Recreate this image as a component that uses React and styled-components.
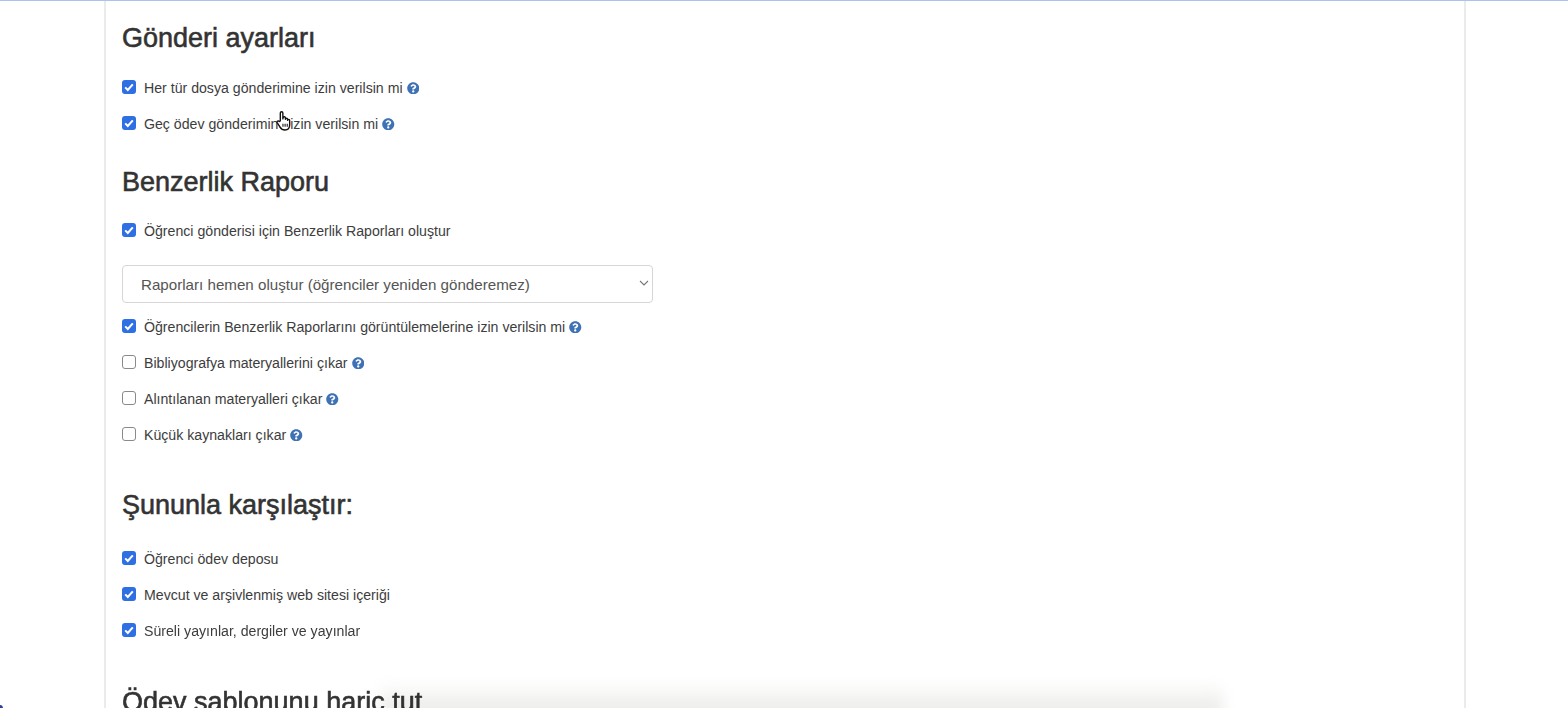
import React from 'react';
import styled, {createGlobalStyle} from 'styled-components';
import {FaQuestionCircle} from 'react-icons/fa';

const GlobalStyle = createGlobalStyle`
html, body {
    margin: 0;
    padding: 0;
    background: #fff;
    height: 708px;
    overflow: hidden;
}
* {
    box-sizing: border-box;
}
`

const sections = [
    {title: 'Gönderi ayarları', top: 22, gap: 17, rows: [
        {text: 'Her tür dosya gönderimine izin verilsin mi', checked: true, help: true},
        {text: 'Geç ödev gönderimine izin verilsin mi', checked: true, help: true},
    ]},
    {title: 'Benzerlik Raporu', top: 25, gap: 16, rows: [
        {text: 'Öğrenci gönderisi için Benzerlik Raporları oluştur', checked: true},
        {select: 'Raporları hemen oluştur (öğrenciler yeniden gönderemez)'},
        {text: 'Öğrencilerin Benzerlik Raporlarını görüntülemelerine izin verilsin mi', checked: true, help: true},
        {text: 'Bibliyografya materyallerini çıkar', help: true},
        {text: 'Alıntılanan materyalleri çıkar', help: true},
        {text: 'Küçük kaynakları çıkar', help: true},
    ]},
    {title: 'Şununla karşılaştır:', top: 37, gap: 21, rows: [
        {text: 'Öğrenci ödev deposu', checked: true},
        {text: 'Mevcut ve arşivlenmiş web sitesi içeriği', checked: true},
        {text: 'Süreli yayınlar, dergiler ve yayınlar', checked: true},
    ]},
    {title: 'Ödev şablonunu hariç tut', top: 38, gap: 17, rows: []},
];

const App = () => {
    return (
        <Page>
            <GlobalStyle/>
            <Card>
                {sections.map((section, index)=>(
                    <Section key={index} $top={section.top}>
                        <Heading $gap={section.gap}>{section.title}</Heading>
                        {section.rows.map((row, i)=> row.select ? (
                            <SelectWrap key={i}>
                                <Select defaultValue={row.select}>
                                    <option>{row.select}</option>
                                </Select>
                                <Chevron viewBox="0 0 10 6">
                                    <path d="M1 1l4 4 4-4" fill="none" stroke="#777" strokeWidth="1.1"/>
                                </Chevron>
                            </SelectWrap>
                        ) : (
                            <Row key={i}>
                                <Box $checked={row.checked}>
                                    {row.checked && (
                                        <svg viewBox="0 0 14 14" width="14" height="14">
                                            <path d="M3.2 7.4l2.6 2.6 5-5.6" fill="none" stroke="#fff" strokeWidth="2"/>
                                        </svg>
                                    )}
                                </Box>
                                <Label>{row.text}</Label>
                                {row.help && <Help/>}
                            </Row>
                        ))}
                    </Section>
                ))}
            </Card>
            <Cursor viewBox="0 0 16 20">
                <path d="M5 10V2.500a1.200 1.200 0 0 1 2.400 0V8l.2-1a1.100 1.100 0 0 1 2.200.2V8.400a1 1 0 0 1 2 0V9.400a1 1 0 0 1 2 .2v4c0 2.600-1.400 4.900-4.400 4.900-2.600 0-3.600-1-4.600-2.800L2 11.500c-.7-1.300 1.200-2.300 2-1z" fill="#fff" stroke="#111" strokeWidth="1.300" strokeLinejoin="round"/>
                <path d="M7.500 12.500v3M9.500 12.500v3M11.500 12.500v3" stroke="#111" strokeWidth="1"/>
            </Cursor>
            <BottomShade/>
            <CornerMark/>
        </Page>
    );
}

const Page = styled.div`
position: relative;
height: 708px;
overflow: hidden;
background: #fff;
border-top: 1px solid #a9c3ee;
font-family: "Liberation Sans", Arial, sans-serif;
`
const Card = styled.div`
display: flex;
flex-direction: column;
margin: 0 102px 0 104px;
height: 707px;
padding: 0 16px;
background: #fff;
border-left: 2px solid #ebebeb;
border-right: 2px solid #ebebeb;
filter: blur(0.35px);
`
const Section = styled.section`
flex: none;
padding-top: ${props => props.$top}px;
`
const Heading = styled.h2`
margin: 0 0 ${props => props.$gap}px;
font-size: 27px;
line-height: 30px;
font-weight: 400;
color: #333;
-webkit-text-stroke: 0.6px #333;
`
const Row = styled.div`
display: flex;
align-items: center;
height: 36px;
`
const Box = styled.span`
flex: none;
display: block;
width: 14px;
height: 14px;
margin-top: -2px;
border-radius: 3px;
background: ${props => props.$checked ? '#2f6fe4' : '#fff'};
border: ${props => props.$checked ? 'none' : '1px solid #8a8a8a'};
svg {
    display: block;
}
`
const Label = styled.span`
margin-left: 8px;
font-size: 14.150px;
color: #3d3d3d;
`
const Help = styled(FaQuestionCircle)`
flex: none;
margin-left: 4px;
font-size: 12.500px;
color: #3f72b5;
`
const SelectWrap = styled.div`
position: relative;
width: 531px;
height: 38px;
margin: 16px 0 6px;
`
const Select = styled.select`
appearance: none;
display: block;
width: 100%;
height: 100%;
padding: 0 18px;
border: 1px solid #d6d6d6;
border-radius: 4px;
background: #fff;
font-family: inherit;
font-size: 15.150px;
color: #555;
`
const Chevron = styled.svg`
position: absolute;
top: 15px;
right: 4px;
width: 10px;
height: 6px;
`
const Cursor = styled.svg`
position: absolute;
left: 275px;
top: 109px;
width: 17px;
height: 22px;
`
const BottomShade = styled.div`
position: absolute;
left: 380px;
right: 345px;
bottom: -8px;
height: 34px;
background: linear-gradient(to bottom, rgba(232, 232, 229, 0), #e6e6e3);
filter: blur(7px);
mix-blend-mode: multiply;
`
const CornerMark = styled.div`
position: absolute;
left: -4px;
bottom: -4px;
width: 7px;
height: 7px;
border-radius: 50%;
background: #2c3f9a;
`

export default App;
